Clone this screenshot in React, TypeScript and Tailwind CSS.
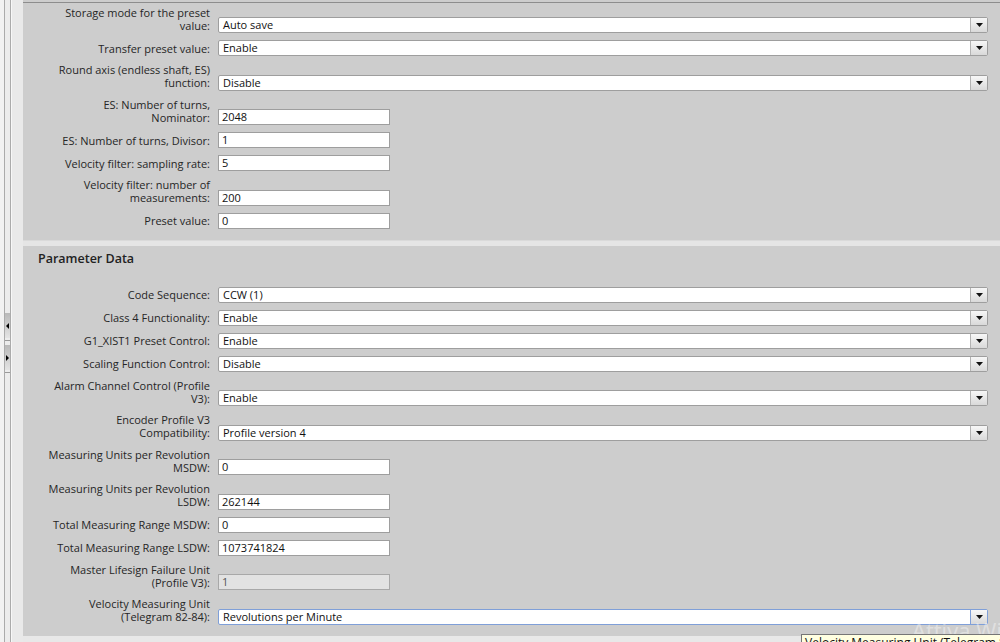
import React from "react"

type Kind = "select" | "input" | "disabled"

interface Row {
  label: string[]
  kind: Kind
  value: string
  focused?: boolean
}

const generalRows: Row[] = [
  { label: ["Storage mode for the preset", "value:"], kind: "select", value: "Auto save" },
  { label: ["Transfer preset value:"], kind: "select", value: "Enable" },
  { label: ["Round axis (endless shaft, ES)", "function:"], kind: "select", value: "Disable" },
  { label: ["ES: Number of turns,", "Nominator:"], kind: "input", value: "2048" },
  { label: ["ES: Number of turns, Divisor:"], kind: "input", value: "1" },
  { label: ["Velocity filter: sampling rate:"], kind: "input", value: "5" },
  { label: ["Velocity filter: number of", "measurements:"], kind: "input", value: "200" },
  { label: ["Preset value:"], kind: "input", value: "0" },
]

const parameterRows: Row[] = [
  { label: ["Code Sequence:"], kind: "select", value: "CCW (1)" },
  { label: ["Class 4 Functionality:"], kind: "select", value: "Enable" },
  { label: ["G1_XIST1 Preset Control:"], kind: "select", value: "Enable" },
  { label: ["Scaling Function Control:"], kind: "select", value: "Disable" },
  { label: ["Alarm Channel Control (Profile", "V3):"], kind: "select", value: "Enable" },
  { label: ["Encoder Profile V3", "Compatibility:"], kind: "select", value: "Profile version 4" },
  { label: ["Measuring Units per Revolution", "MSDW:"], kind: "input", value: "0" },
  { label: ["Measuring Units per Revolution", "LSDW:"], kind: "input", value: "262144" },
  { label: ["Total Measuring Range MSDW:"], kind: "input", value: "0" },
  { label: ["Total Measuring Range LSDW:"], kind: "input", value: "1073741824" },
  { label: ["Master Lifesign Failure Unit", "(Profile V3):"], kind: "disabled", value: "1" },
  {
    label: ["Velocity Measuring Unit", "(Telegram 82-84):"],
    kind: "select",
    value: "Revolutions per Minute",
    focused: true,
  },
]

function DropArrow() {
  return (
    <svg width="7" height="4" viewBox="0 0 7 4">
      <polygon points="0,0 7,0 3.5,4" fill="#111" />
    </svg>
  )
}

function Control({ row }: { row: Row }) {
  if (row.kind === "select") {
    return (
      <div
        className={`flex-1 h-[16px] flex rounded-[2px] bg-white border ${
          row.focused ? "border-[#7f9fd8]" : "border-[#9e9e9e]"
        }`}
      >
        <div className="flex-1 pl-[4px] leading-[14px] text-[#111] whitespace-nowrap">{row.value}</div>
        <div
          className={`w-[17px] flex items-center justify-center border-l bg-gradient-to-b from-[#f7f7f7] to-[#d9d9d9] ${
            row.focused ? "border-[#7f9fd8]" : "border-[#b3b3b3]"
          }`}
        >
          <DropArrow />
        </div>
      </div>
    )
  }
  const disabled = row.kind === "disabled"
  return (
    <div
      className={`w-[172px] h-[16px] border pl-[3px] leading-[14px] whitespace-nowrap ${
        disabled ? "bg-[#e2e2e2] border-[#a8a8a8] text-[#555]" : "bg-white border-[#9e9e9e] text-[#111]"
      }`}
    >
      {row.value}
    </div>
  )
}

function FormRow({ row }: { row: Row }) {
  return (
    <div className="flex items-end gap-[8px]">
      <div className="w-[187px] shrink-0 text-right leading-[13px] pb-[1.5px] whitespace-nowrap text-[#262626]">
        {row.label.map((l, i) => (
          <div key={i}>{l}</div>
        ))}
      </div>
      <Control row={row} />
    </div>
  )
}

function Rows({ rows }: { rows: Row[] }) {
  return (
    <div className="flex flex-col gap-[7px] pr-[12px]">
      {rows.map((r, i) => (
        <FormRow key={i} row={r} />
      ))}
    </div>
  )
}

function Splitter() {
  return (
    <div className="flex h-full shrink-0">
      <div className="w-[4px] bg-[#f2f2f2]" />
      <div className="w-[7px] flex flex-col border-x border-[#ababab] bg-[#ececec]">
        <div className="mt-[313px] h-[25px] flex items-center justify-center bg-gradient-to-b from-[#b9b9b9] to-[#e4e4e4]">
          <span className="w-0 h-0 border-y-[3px] border-y-transparent border-r-[3px] border-r-black" />
        </div>
        <div className="h-[1px] bg-[#9a9a9a] mt-[2px]" />
        <div className="mt-[4px] h-[25px] flex items-center justify-center bg-gradient-to-b from-[#b9b9b9] to-[#e4e4e4]">
          <span className="w-0 h-0 border-y-[3px] border-y-transparent border-l-[3px] border-l-black" />
        </div>
        <div className="h-[1px] bg-[#9a9a9a] mt-[2px]" />
      </div>
      <div className="w-[12px] bg-[#e9e9e9] border-l border-[#f7f7f7]" />
    </div>
  )
}

export default function App() {
  return (
    <div
      className="relative w-[1000px] h-[642px] overflow-hidden flex bg-[#ebebeb] text-[11px]"
      style={{ fontFamily: '"Open Sans", "Noto Sans", sans-serif' }}
    >
      <Splitter />
      <div className="flex-1 flex flex-col">
        <div className="h-[3px] bg-[#cdcdcd] border-b border-[#8d8d8d]" />
        <div className="bg-[#cdcdcd] pt-[2.5px] pb-[11px]">
          <Rows rows={generalRows} />
        </div>
        <div className="h-[6px] bg-[#e5e5e5] border-t border-[#dadada]" />
        <div className="bg-[#cdcdcd] pt-[5px] pb-[11px]">
          <div className="pl-[15px] h-[16px] leading-[16px] text-[12.5px] font-semibold text-[#222]">
            Parameter Data
          </div>
          <div className="mt-[20px]">
            <Rows rows={parameterRows} />
          </div>
        </div>
        <div className="flex-1 bg-[#e8e8e8]" />
      </div>

      <div className="absolute left-[912px] top-[617px] text-[22px] leading-[26px] text-white/40 whitespace-nowrap">
        Attiva Windows
      </div>
      <div className="absolute left-[801px] top-[634px] w-[260px] h-[20px] bg-[#ffffe1] border border-[#767676] pl-[3px] text-[12px] leading-[16px] text-[#111] whitespace-nowrap">
        Velocity Measuring Unit (Telegram 82-84)
      </div>
    </div>
  )
}
